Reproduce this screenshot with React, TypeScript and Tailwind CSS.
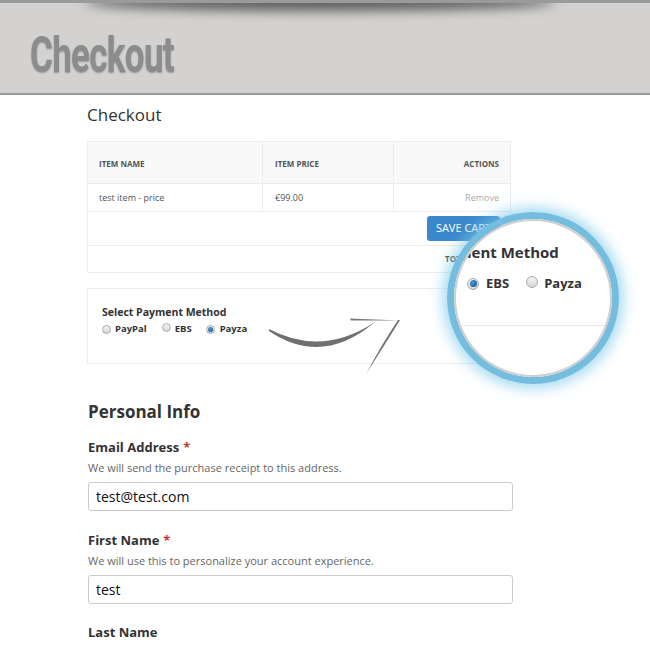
import React from 'react';

const Radio = ({ checked, big }: { checked?: boolean; big?: boolean }) => (
    <span
        className={`inline-flex items-center justify-center rounded-full border border-[#a9a9a9] bg-[linear-gradient(#f4f4f4,#d6d6d6)] ${big ? 'w-[12px] h-[12px]' : 'w-[9px] h-[9px]'}`}
    >
        {checked && (
            <span
                className={`rounded-full bg-[radial-gradient(circle_at_35%_35%,#4a9ad8,#0b4f8a)] ${big ? 'w-[7px] h-[7px]' : 'w-[5px] h-[5px]'}`}
            />
        )}
    </span>
);

const Field = ({ label, help, value, required }: { label: string; help?: string; value?: string; required?: boolean }) => (
    <div>
        <div className="text-[13px] leading-[18px] font-bold text-[#333]">
            {label}
            {required && <span className="text-[#c0392b] ml-1">*</span>}
        </div>
        {help && <div className="mt-[4px] text-[11px] leading-[16px] text-[#666]">{help}</div>}
        {value !== undefined && (
            <input
                readOnly
                value={value}
                className="mt-[6px] w-[425px] h-[29px] border border-[#ccc] rounded-[3px] px-[7px] text-[14px] text-[#111] outline-none"
            />
        )}
    </div>
);

export default function App() {
    return (
        <div className="relative w-[650px] h-[650px] overflow-hidden bg-white font-['Open_Sans',sans-serif]">
            {/* banner */}
            <div className="relative h-[95px] border-t-[3px] border-b-[2px] border-[#9a9a9a] bg-[#d3d2d0] overflow-hidden">
                <div className="absolute left-[85px] right-[95px] top-[-10px] h-[18px] rounded-[50%] bg-[#5c5c5c] blur-[6px]" />
                <div className="pl-[30px] pt-[24px]">
                    <h1 className="text-[50px] leading-[56px] font-bold text-[#8c8c8c] tracking-[-1px] font-['Roboto',sans-serif] origin-left scale-x-[0.70] [text-shadow:0_1px_2px_rgba(0,0,0,0.3)]">
                        Checkout
                    </h1>
                </div>
            </div>

            <div className="ml-[87px] w-[426px]">
                <h2 className="mt-[8px] text-[17px] leading-[24px] text-[#333]">Checkout</h2>

                {/* cart table */}
                <div className="mt-[14px] w-[424px] border border-[#ececec] text-[#555]">
                    <div className="grid grid-cols-[175px_131px_1fr] h-[42px] bg-[#f9f9f9] border-b border-[#ececec] text-[8px] font-bold uppercase">
                        <div className="flex items-center pt-[3px] pl-[11px] border-r border-[#ececec]">Item Name</div>
                        <div className="flex items-center pt-[3px] pl-[12px] border-r border-[#ececec]">Item Price</div>
                        <div className="flex items-center pt-[3px] justify-end pr-[11px]">Actions</div>
                    </div>
                    <div className="grid grid-cols-[175px_131px_1fr] h-[28px] border-b border-[#ececec] text-[9px]">
                        <div className="flex items-center pt-[1px] pl-[11px] border-r border-[#ececec]">test item - price</div>
                        <div className="flex items-center pt-[1px] pl-[12px] border-r border-[#ececec]">€99.00</div>
                        <div className="flex items-center pt-[1px] justify-end pr-[11px] text-[#aaa]">Remove</div>
                    </div>
                    <div className="flex items-center justify-end h-[34px] pr-[10px] border-b border-[#ececec]">
                        <button className="w-[73px] h-[25px] rounded-[3px] bg-[#3b87cb] text-white text-[11px]">SAVE CART</button>
                    </div>
                    <div className="flex items-center pl-[357px] h-[26px] text-[8px] font-bold text-[#555]">TOTAL</div>
                </div>

                {/* payment box */}
                <div className="relative mt-[15px] w-[424px] h-[76px] border border-[#ececec] pl-[14px] pt-[16px]">
                    <div className="text-[10.5px] leading-[14px] font-bold text-[#333]">Select Payment Method</div>
                    <div className="mt-[3px] flex items-center text-[9.5px] font-bold text-[#333]">
                        <Radio />
                        <span className="ml-[4px]">PayPal</span>
                        <span className="ml-[15px]"><Radio /></span>
                        <span className="ml-[4px]">EBS</span>
                        <span className="ml-[14px]"><Radio checked /></span>
                        <span className="ml-[5px]">Payza</span>
                    </div>
                </div>

                {/* personal info */}
                <div className="pl-[1px]">
                    <h3 className="mt-[36px] text-[17px] leading-[24px] font-bold text-[#333]">Personal Info</h3>
                    <div className="mt-[14px]">
                        <Field label="Email Address" required help="We will send the purchase receipt to this address." value="test@test.com" />
                    </div>
                    <div className="mt-[20px]">
                        <Field label="First Name" required help="We will use this to personalize your account experience." value="test" />
                    </div>
                    <div className="mt-[19px]">
                        <Field label="Last Name" />
                    </div>
                </div>
            </div>

            {/* hand-drawn arrow */}
            <svg className="absolute left-0 top-0 pointer-events-none" width="650" height="650">
                <path d="M269 329 Q322 357 375 322 Q322 367 269 331 Z" fill="#707070" />
                <path d="M350 318.5 L400 320.5 L351 320.5 Z" fill="#7a7a7a" />
                <path d="M400 320 Q384 346 366 374 Q382 344 398 320 Z" fill="#707070" />
            </svg>

            {/* magnifier lens */}
            <div className="absolute left-[447px] top-[212px] w-[172px] h-[172px] rounded-full border-[7px] border-[#74bddf] shadow-[0_0_14px_4px_rgba(120,200,235,0.7)]">
                <div className="relative w-full h-full rounded-full overflow-hidden bg-white border-[2px] border-[#cfcfcf]">
                    <div className="absolute left-[11px] top-[21px] text-[15px] leading-[20px] font-bold text-[#333] whitespace-nowrap">
                        ient Method
                    </div>
                    <div className="absolute left-[11px] top-[53px] flex items-center text-[13px] font-bold text-[#333]">
                        <Radio checked big />
                        <span className="ml-[7px]">EBS</span>
                        <span className="ml-[17px]"><Radio big /></span>
                        <span className="ml-[6px]">Payza</span>
                    </div>
                    <div className="absolute left-0 right-0 top-[104px] h-px bg-[#e6e6e6]" />
                </div>
            </div>
        </div>
    );
}
